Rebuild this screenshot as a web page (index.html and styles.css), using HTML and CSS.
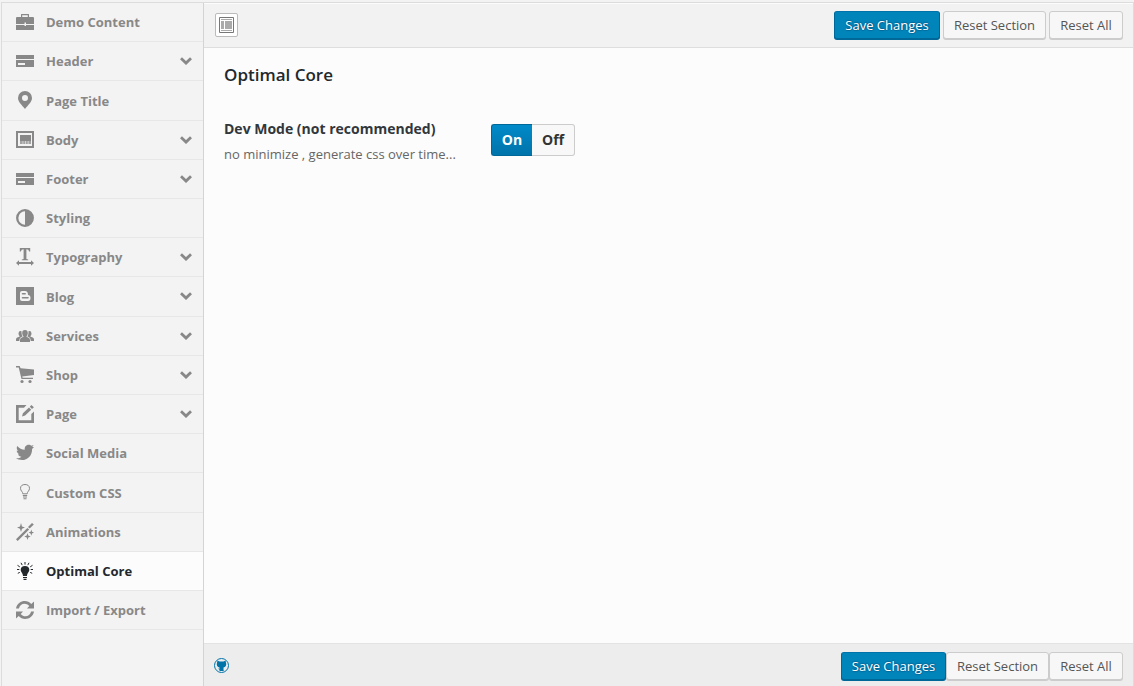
FILE: index.html
```html
<!DOCTYPE html>
<html lang="en">
<head>
<meta charset="utf-8">
<title>Optimal Core</title>
<link rel="stylesheet" href="styles.css">
</head>
<body>
<svg class="defs" width="0" height="0">
  <symbol id="down" viewBox="0 0 12 8"><path d="M1 1.3 6 6.1l5-4.8" fill="none" stroke="currentColor" stroke-width="2.8"/></symbol>
  <symbol id="card" viewBox="0 0 18 18"><path fill-rule="evenodd" d="M0 3h18v4H0zM0 8h18v7H0zM2 11v2h7v-2z"/></symbol>
</svg>
<div class="panel">
  <ul class="menu">
    <li><svg class="icon" viewBox="0 0 18 18"><path fill-rule="evenodd" d="M5 4V1.500Q5 1 5.500 1h7q.5 0 .5.5V4h4q1 0 1 1v6h-8V9.500H8.500V11H0V5q0-1 1-1zM6.200 4h5.600V2.200H6.200zM0 12h8.500v1H10v-1h8v5H0z"/></svg>Demo Content</li>
    <li><svg class="icon"><use href="#card"/></svg>Header<svg class="arrow"><use href="#down"/></svg></li>
    <li><svg class="icon" viewBox="0 0 18 18"><path fill-rule="evenodd" d="M9 0a7 7 0 0 1 7 7c0 4-4 7-7 11C6 14 2 11 2 7a7 7 0 0 1 7-7zm0 4a3 3 0 1 0 0 6 3 3 0 0 0 0-6z"/></svg>Page Title</li>
    <li><svg class="icon" viewBox="0 0 18 18"><path fill-rule="evenodd" d="M0 0h18v17H0zM2 2v13h14V2z"/><path d="M4 4h11v6H4z"/><path opacity=".75" d="M4 10h2.700v3H4zM7.200 10h2v3h-2zM9.800 10h2v3h-2zM12.400 10H15v3h-2.600z"/></svg>Body<svg class="arrow"><use href="#down"/></svg></li>
    <li><svg class="icon"><use href="#card"/></svg>Footer<svg class="arrow"><use href="#down"/></svg></li>
    <li><svg class="icon" viewBox="0 0 18 18"><circle cx="9" cy="9" r="7.800" fill="none" stroke="currentColor" stroke-width="2.300"/><path d="M9 1a8 8 0 0 1 0 16z"/></svg>Styling</li>
    <li><svg class="icon" viewBox="0 0 18 18"><path d="M3.800 0h10.400v3.500h-1Q12.700 1.200 10.400 1.200V11l1.800.4v.8H5.800v-.8l1.800-.4V1.200Q5.300 1.200 4.800 3.500h-1zM0 15l3-2.700V14h12v-1.700l3 2.700-3 2.700V16H3v1.700z"/></svg>Typography<svg class="arrow"><use href="#down"/></svg></li>
    <li><svg class="icon" viewBox="0 0 18 18"><path fill-rule="evenodd" d="M0 0h18v18H0zM6 4Q4 4 4 6v6q0 2 2 2h6q2.500 0 2.500-3T12 8Q12 4 9 4zM6.500 6H9q1 0 1 .8t-1 .7H6.500q-.8 0-.8-.7t.8-.8zm0 4H12q.8 0 .8.800T12 11.600H6.500q-.8 0-.8-.8t.8-.8z"/></svg>Blog<svg class="arrow"><use href="#down"/></svg></li>
    <li><svg class="icon" viewBox="0 0 18 18"><path d="M9 3c2 0 2.800 1.200 2.800 3 0 1.600-.6 2.500-1.300 3.200v.6l2 .9Q14 11.300 14 13v2H4v-2q0-1.700 1.500-2.300l2-.9v-.6C6.800 8.500 6.200 7.600 6.200 6c0-1.800.8-3 2.800-3zM5.600 4.200Q2.600 3.500 2.500 6.500q0 1.700 1 2.500v.7L1.200 10.500Q0 11 0 12.500V14h3.400v-1q.1-2.300 2-3L6.600 9.500Q5.600 8 5.600 6.300 5.400 5 5.600 4.200zM12.400 4.200q3-.7 3.100 2.300 0 1.700-1 2.500v.7l2.300.8q1.200.5 1.200 2V14h-3.400v-1q-.1-2.300-2-3l-1.200-.5q1-1.500 1-3.200.2-1.300 0-2.100z"/></svg>Services<svg class="arrow"><use href="#down"/></svg></li>
    <li><svg class="icon" viewBox="0 0 18 18"><path d="M0 0h3.600l1 2.200L18 3.500V9L6.200 10.500l.4 1.200H17V13H5.500L2.700 1.500H0z"/><circle cx="6" cy="15.500" r="1.600"/><circle cx="14" cy="15.500" r="1.600"/></svg>Shop<svg class="arrow"><use href="#down"/></svg></li>
    <li><svg class="icon" viewBox="0 0 18 18"><path d="M0 0h10.500L8 2.700H2.700v12.600h12.600V9L18 6.500V18H0zM6 11.500l.9-3.200L13 2.500l2.200 2.200-6.100 5.900zM13.800 1.700 15.400 0l2.500 2.300L16 4z"/></svg>Page<svg class="arrow"><use href="#down"/></svg></li>
    <li><svg class="icon" viewBox="0 0 18 18"><path d="M18 3.100l-1.900 1.800C16.300 11.500 11.600 16 6 16c-2.300 0-4.400-.6-6-1.700 2 .2 4-.4 5.400-1.500-1.600-.1-2.900-1.100-3.400-2.600h1.600C1.900 9.700.7 8.300.7 6.500l1.600.4C.7 5.700.3 3.600 1.300 1.900c1.800 2.200 4.500 3.700 7.500 3.900C8.200 3.200 10 .7 12.700.7c1.200 0 2 .4 2.800 1.100l2.200-.9-1.500 2z"/></svg>Social Media</li>
    <li><svg class="icon" viewBox="0 0 18 18"><path fill="none" stroke="currentColor" d="M6.800 10.800C6.800 8.500 4.500 8 4.500 5.300 4.500 2.800 6.400 1.500 9 1.500s4.500 1.300 4.500 3.800c0 2.700-2.300 3.200-2.300 5.500zM6.800 12.500h4.400"/><path d="M7 13.500h4v1H7zM7.500 15.200h3v1h-3z"/></svg>Custom CSS</li>
    <li><svg class="icon" viewBox="0 0 18 18"><path d="M0 16.300 11.400 5l1.700 1.600L1.700 18zM12 4l4-4 1.800 1.600-4.100 4zM5 0l1 3.500L9 4.600 6 5.700 5 9 4 5.700 1 4.600l3-1.100zM15.300 6.500l.7 2.300 2 .8-2 .8-.7 2.400-.7-2.400-2-.8 2-.8zM11.500 10l.8 2.600 2.400.9-2.400.9-.8 2.600-.8-2.600-2.400-.9 2.400-.9z"/></svg>Animations</li>
    <li class="active"><svg class="icon" viewBox="0 0 18 18"><path d="M9 4c2.800 0 4.300 1.600 4.300 3.800 0 2.500-2.100 3-2.300 6.200H7c-.2-3.200-2.300-3.700-2.300-6.200C4.700 5.600 6.200 4 9 4zM7 15h4v1H7zM7.500 16.700h3V18h-3z"/><path stroke="currentColor" stroke-width="1" d="M9 0v2.600M5 .8l1.200 2.300M13 .8l-1.200 2.300M1.500 3.300l2.300 1.600M16.500 3.300l-2.300 1.600M1 7.500h2.300M14.700 7.500H17M1.800 11.300l2-.9M16.200 11.300l-2-.9"/></svg>Optimal Core</li>
    <li><svg class="icon" viewBox="0 0 18 18"><path d="M0 7.500C1.300-.3 11-2.300 15.300 3L18 .6V7.400h-7l2.300-2.300C10 1.300 4 2.300 2.900 7.500zM18 10.500c-1.300 7.800-11 9.800-15.300 4.500L0 17.400v-6.800h7l-2.300 2.300c3.300 3.800 9.300 2.800 10.400-2.400z"/></svg>Import / Export</li>
  </ul>
  <main class="main">
    <div class="bar top">
      <button class="expand" aria-label="Expand"><svg width="15" height="16" viewBox="0 0 15 16"><path fill="#fff" stroke="#777" d="M.5.5h14v15H.5z"/><path fill="#aaa" d="M2 2h11v1H2zM2 4h3v8H2zM6 4h7v8H6zM2 13h11v1H2z"/></svg></button>
      <div class="actions"><button class="btn primary">Save Changes</button><button class="btn">Reset Section</button><button class="btn last">Reset All</button></div>
    </div>
    <section class="content">
      <h2>Optimal Core</h2>
      <div class="field">
        <div class="label"><strong>Dev Mode (not recommended)</strong><span>no minimize , generate css over time...</span></div>
        <div class="switch"><span class="on">On</span><span class="off">Off</span></div>
      </div>
    </section>
    <div class="bar bottom">
      <svg class="github" viewBox="0 0 16 16"><circle cx="7.500" cy="7.500" r="7" fill="none" stroke="#0074a8" stroke-width="1"/><path fill="#0074a8" d="M3.500 2.600l2 .9h4l2-.9.5 2.200c.8 2.700-.5 4.300-2.500 4.700v3l1 .5H5.500v-1.200L3.800 10.600l1.700.1V9.500C3.500 9.100 2.200 7.500 3 4.800z"/></svg>
      <div class="actions"><button class="btn primary">Save Changes</button><button class="btn">Reset Section</button><button class="btn last">Reset All</button></div>
    </div>
  </main>
</div>
</body>
</html>
```

FILE: styles.css
```css
* { box-sizing: border-box; }
body {
  margin: 0;
  height: 686px;
  padding: 2px 0 0 1px;
  overflow: hidden;
  background: #f3f3f3;
  font-family: "Open Sans", sans-serif;
  font-size: 13px;
}
.defs { display: none; }
.panel {
  display: flex;
  height: 684px;
  border: 1px solid #dcdcdc;
  border-bottom: 0;
}
.menu {
  width: 202px;
  margin: 0;
  padding: 0;
  list-style: none;
  background: #f3f3f3;
  border-right: 1px solid #d4d4d4;
}
.menu li {
  display: flex;
  align-items: center;
  height: 39px;
  padding: 0 11px 0 14px;
  border-bottom: 1px solid #e7e7e7;
  color: #888;
  font-weight: 700;
  line-height: 18px;
}
.menu li:nth-child(5n + 3) { height: 40px; }
.menu li:nth-child(5n + 3) svg { margin-bottom: 1px; }
.menu .active { background: #fcfcfc; color: #23282d; }
.icon { width: 18px; height: 18px; margin-right: 12px; flex: none; fill: currentColor; }
.arrow { width: 12px; height: 8px; margin-left: auto; }
.main { flex: 1; display: flex; flex-direction: column; background: #fcfcfc; }
.bar { display: flex; justify-content: space-between; }
.top {
  height: 45px;
  padding: 7px 10px 0 11px;
  background: #f2f2f2;
  border-top: 1px solid #fcfcfc;
  border-bottom: 1px solid #dedede;
}
.bottom {
  height: 43px;
  padding: 8px 10px 0;
  background: #ededed;
  border-top: 1px solid #e3e3e3;
}
.actions { display: flex; align-items: flex-start; gap: 3px; }
.bottom .actions { gap: 0; }
.btn {
  width: 103px;
  height: 28px;
  padding: 0;
  border: 1px solid #ccc;
  border-radius: 3px;
  background: #f7f7f7;
  box-shadow: 0 1px 0 #ccc;
  color: #555;
  font: 13px/26px "Open Sans", sans-serif;
}
.btn.primary {
  width: 106px;
  border-color: #0073aa #006799 #006799;
  background: #0085ba;
  box-shadow: 0 1px 0 #006799;
  color: #fff;
  text-shadow: 0 -1px 1px #006799, 1px 0 1px #006799, 0 1px 1px #006799;
}
.btn.last { width: 74px; }
.bottom .primary { width: 105px; }
.expand {
  display: grid;
  place-items: center;
  width: 23px;
  height: 24px;
  margin-top: 2px;
  padding: 0;
  border: 1px solid #bbb;
  border-radius: 2px;
  background: #fff;
}
.content { flex: 1; padding: 15px 20px; }
h2 { margin: 0; color: #23282d; font-size: 17px; line-height: 24px; font-weight: 600; }
.field { display: flex; align-items: flex-start; margin-top: 32px; }
.label { width: 267px; color: #666; }
.label strong { display: block; color: #32373c; font-size: 14px; line-height: 20px; }
.label span { display: block; margin-top: 6px; line-height: 18px; }
.switch { display: flex; margin-top: 5px; font-size: 14px; font-weight: 700; line-height: 30px; text-align: center; }
.on {
  width: 41px;
  height: 32px;
  border: 1px solid #006799;
  border-right: 0;
  border-radius: 3px 0 0 3px;
  background: linear-gradient(#008ac9, #0073aa);
  color: #fff;
}
.off {
  width: 43px;
  height: 32px;
  border: 1px solid #ccc;
  border-left: 0;
  border-radius: 0 3px 3px 0;
  background: #f8f8f8;
  color: #333;
}
.github { width: 16px; height: 16px; margin-top: 6px; }
```
